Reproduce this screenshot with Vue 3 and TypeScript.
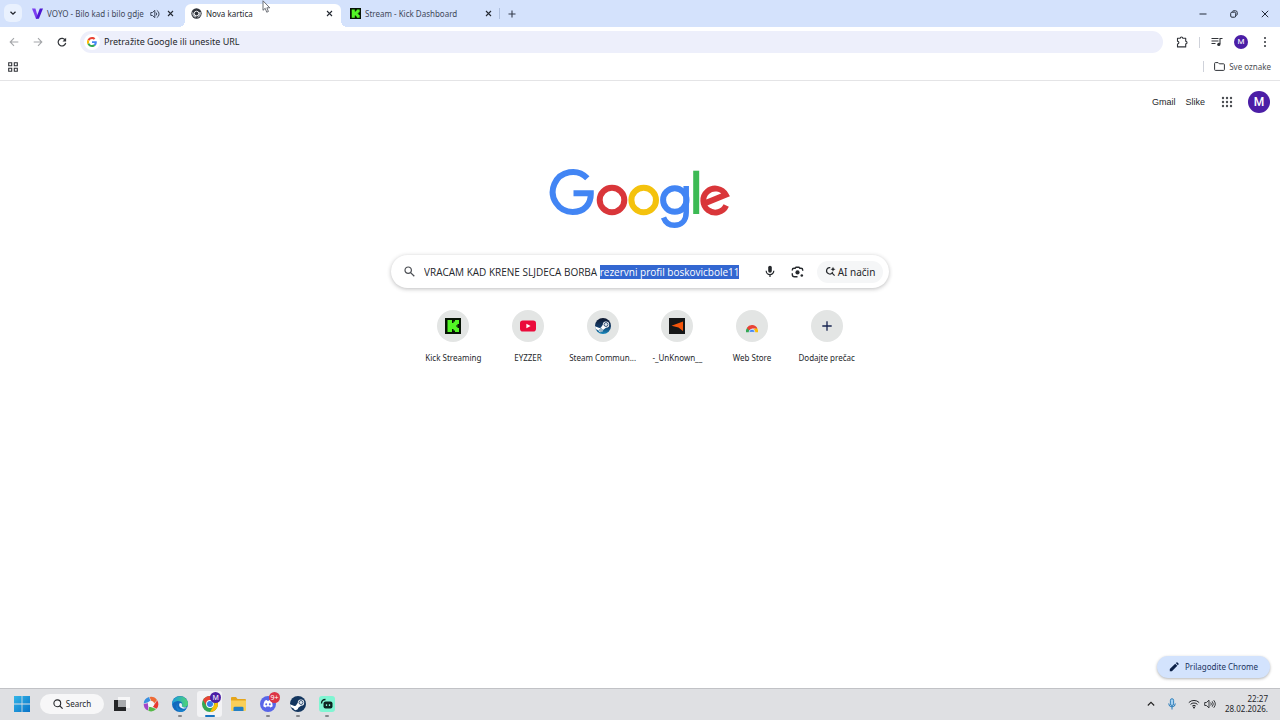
<script setup lang="ts">
import { onMounted, ref } from 'vue'

interface Tab {
  id: string
  title: string
  active?: boolean
  audio?: boolean
}

const tabs: Tab[] = [
  { id: 'voyo', title: 'VOYO - Bilo kad i bilo gdje', audio: true },
  { id: 'new', title: 'Nova kartica', active: true },
  { id: 'kick', title: 'Stream - Kick Dashboard' },
]

const shortcuts = [
  { id: 'kick', label: 'Kick Streaming' },
  { id: 'youtube', label: 'EYZZER' },
  { id: 'steam', label: 'Steam Commun...' },
  { id: 'faceit', label: '-_UnKnown__' },
  { id: 'store', label: 'Web Store' },
]

const taskApps = [
  { id: 'picasa', name: 'Picasa', running: false },
  { id: 'edge', name: 'Edge', running: true },
  { id: 'chrome', name: 'Chrome', running: true },
  { id: 'files', name: 'File Explorer', running: false },
  { id: 'discord', name: 'Discord', running: true },
  { id: 'steam', name: 'Steam', running: true },
  { id: 'streamlabs', name: 'Streamlabs', running: true },
]

const typed = 'VRACAM KAD KRENE SLJDECA BORBA '
const query = ref(typed + 'rezervni profil boskovicbole11')
const address = ref('')
const searchBox = ref<HTMLInputElement | null>(null)

onMounted(() => {
  searchBox.value?.focus()
  searchBox.value?.setSelectionRange(typed.length, query.value.length)
})
</script>

<template>
  <div class="screen">
    <header class="tabstrip">
      <button class="tab-search" aria-label="Pretraži kartice">
        <svg width="8" height="8" viewBox="0 0 8 8"><path d="M1.5 2.8 4 5.2l2.5-2.4" fill="none" stroke="#20242c" stroke-width="1.3" /></svg>
      </button>
      <nav class="tabs">
        <div v-for="tab in tabs" :key="tab.id" class="tab" :class="{ active: tab.active }">
          <svg v-if="tab.id === 'voyo'" class="favicon" viewBox="0 0 12 12">
            <path d="M0 .5h3.7L6.3 9 5.9 11.8H4.300z" fill="#7b3df0" />
            <path d="M12 .5H8.500L4.300 11.800H7.500z" fill="#4d16d2" />
          </svg>
          <svg v-else-if="tab.id === 'new'" class="favicon" viewBox="0 0 12 12">
            <circle cx="6" cy="6" r="5.600" fill="#30343a" />
            <path d="M1.800 3.900 4 7.500 6 8.300 4.900 10.700A4.800 4.800 0 0 1 1.800 3.900z" fill="#a9adb3" />
            <path d="M8.600 4.300h2A4.800 4.800 0 0 1 6.600 10.700L8.700 7z" fill="#a9adb3" />
            <circle cx="6" cy="6" r="2.500" fill="#30343a" stroke="#fff" />
          </svg>
          <svg v-else class="favicon" viewBox="0 0 16 16">
            <path d="M0 0h16v16H0z" fill="#071304" />
            <path d="M2.500 2h4.500v3h1.500V3.500H10V2h4v4h-1.500v1.500H11v1h1.500V10H14v4h-4v-1.500H8.500V11H7v3H2.500z" fill="#53f526" />
          </svg>
          <span class="tab-title">{{ tab.title }}</span>
          <svg v-if="tab.audio" class="audio" width="10" height="10" viewBox="0 0 10 10">
            <path d="M.8 3.500h1.700L4.800 1.300v7.400L2.500 6.500H.8z" fill="none" stroke="#3d485c" />
            <path d="M6 3.500a2 2 0 0 1 0 3M6.800 1.400a4 4 0 0 1 0 7.200" fill="none" stroke="#3d485c" />
          </svg>
          <button class="tab-close" :aria-label="'Zatvori ' + tab.title">
            <svg width="7" height="7" viewBox="0 0 7 7"><path d="m1 1 5 5m0-5L1 6" stroke="#252a33" stroke-width="1.100" /></svg>
          </button>
        </div>
      </nav>
      <button class="new-tab" aria-label="Nova kartica">
        <svg width="8" height="8" viewBox="0 0 8 8"><path d="M4 .5v7M.5 4h7" stroke="#333b4a" stroke-width="1.100" /></svg>
      </button>
      <div class="window-controls">
        <button aria-label="Minimiziraj"><svg width="8" height="8" viewBox="0 0 8 8"><path d="M.5 4h7" stroke="#222a38" /></svg></button>
        <button aria-label="Vrati"><svg width="8" height="8" viewBox="0 0 8 8"><rect x=".7" y="2.200" width="5" height="5" rx="1.200" fill="none" stroke="#222a38" /><path d="M2.300 1.500Q2.800.8 4 .8h1.500q1.700 0 1.700 1.700V4q0 1-.7 1.600" fill="none" stroke="#222a38" /></svg></button>
        <button aria-label="Zatvori"><svg width="8" height="8" viewBox="0 0 8 8"><path d="m.8.8 6.400 6.400m0-6.400L.8 7.200" stroke="#222a38" /></svg></button>
      </div>
    </header>

    <div class="toolbar">
      <button class="tool" aria-label="Natrag"><svg width="10" height="10" viewBox="0 0 10 10"><path d="M9.300 5H1.300M5 1.200 1.200 5 5 8.800" fill="none" stroke="#a4a6a9" stroke-width="1.100" /></svg></button>
      <button class="tool" aria-label="Naprijed"><svg width="10" height="10" viewBox="0 0 10 10"><path d="M.7 5h8M5 1.200 8.800 5 5 8.800" fill="none" stroke="#a4a6a9" stroke-width="1.100" /></svg></button>
      <button class="tool" aria-label="Ponovno učitaj"><svg width="10" height="10" viewBox="0 0 10 10"><path d="M8.300 3.300A3.800 3.800 0 1 0 8.700 6" fill="none" stroke="#303338" stroke-width="1.200" /><path d="M9.100.8v3.600H5.500z" fill="#303338" /></svg></button>
      <div class="omnibox">
        <span class="g-badge">
          <svg width="10" height="10" viewBox="0 0 48 48">
            <path fill="#EA4335" d="M24 9.500c3.500 0 6.700 1.200 9.200 3.600l6.900-6.900C35.900 2.400 30.500 0 24 0 14.600 0 6.500 5.400 2.600 13.200l8 6.200C12.400 13.700 17.700 9.500 24 9.500z" />
            <path fill="#4285F4" d="M47 24.600c0-1.600-.2-3.100-.4-4.600H24v9h12.900c-.6 3-2.300 5.500-4.800 7.200l7.700 6C44.400 38 47 32 47 24.600z" />
            <path fill="#FBBC05" d="M10.500 28.600A14.500 14.500 0 0 1 10.500 19.400l-8-6.200a24 24 0 0 0 0 21.600z" />
            <path fill="#34A853" d="M24 48c6.500 0 11.900-2.100 15.900-5.800l-7.700-6c-2.200 1.500-4.900 2.300-8.200 2.300-6.300 0-11.600-4.200-13.500-9.900l-8 6.200C6.500 42.600 14.600 48 24 48z" />
          </svg>
        </span>
        <input v-model="address" type="text" placeholder="Pretražite Google ili unesite URL" aria-label="Adresna traka" />
      </div>
      <button class="tool" aria-label="Proširenja"><svg width="12" height="12" viewBox="0 0 12 12"><path d="M1.500 2.300h2.700q0-1.300 1.300-1.300t1.300 1.300h2.900v3q1.300 0 1.300 1.300T9.700 7.900v3H1.500V8q1.400-.1 1.400-1.400T1.500 5.200z" fill="none" stroke="#303338" stroke-width="1.100" stroke-linejoin="round" /></svg></button>
      <span class="divider"></span>
      <button class="tool" aria-label="Upravljanje medijima"><svg width="12" height="10" viewBox="0 0 12 10"><path d="M.5 1.500h7M.5 4h7M.5 6.500h4M9 7V1.500h2.500" fill="none" stroke="#303338" stroke-width="1.100" /><circle cx="7.800" cy="7.400" r="1.600" fill="#303338" /></svg></button>
      <button class="tool" aria-label="Profil"><span class="avatar small">M</span></button>
      <button class="tool" aria-label="Izbornik"><svg width="4" height="12" viewBox="0 0 4 12" fill="#303338"><circle cx="2" cy="2" r="1" /><circle cx="2" cy="6" r="1" /><circle cx="2" cy="10" r="1" /></svg></button>
    </div>

    <div class="bookmarks">
      <button class="tool" aria-label="Grupe kartica"><svg width="10" height="10" viewBox="0 0 10 10"><path d="M.7.7h3v3h-3zM6.300.7h3v3h-3zM.7 6.300h3v3h-3zM6.300 6.300h3v3h-3z" fill="none" stroke="#303338" stroke-width="1.100" /></svg></button>
      <span class="divider"></span>
      <button class="all-bookmarks">
        <svg width="11" height="9" viewBox="0 0 11 9"><path d="M.6 1.400q0-.8.8-.8h2.700l1.200 1.200h4.300q.8 0 .8.8v5q0 .8-.8.8H1.400q-.8 0-.8-.8z" fill="none" stroke="#303338" /></svg>
        Sve oznake
      </button>
    </div>

    <main class="page">
      <nav class="page-nav">
        <a href="#gmail">Gmail</a>
        <a href="#slike">Slike</a>
        <button class="apps" aria-label="Google aplikacije">
          <svg width="12" height="12" viewBox="0 0 12 12" fill="#4a4d51">
            <template v-for="r in 3" :key="r"><circle v-for="c in 3" :key="c" :cx="c * 4 - 2" :cy="r * 4 - 2" r="1.200" /></template>
          </svg>
        </button>
        <button class="avatar large" aria-label="Google račun">M</button>
      </nav>

      <svg class="logo" width="182" height="61" viewBox="0 0 182 61" fill="none" stroke-width="6" role="img" aria-label="Google">
        <path d="M38.300 10.300A20 20 0 1 0 23.700 44C35.500 44 42 36 41.800 25.200H24.500" stroke="#4285f4" />
        <circle cx="63" cy="32" r="12.300" stroke="#d9363a" />
        <circle cx="94.700" cy="32" r="12.300" stroke="#f4c20d" />
        <circle cx="125.800" cy="32" r="11.700" stroke="#4285f4" />
        <path d="M137.200 18V44.500C137.200 53 132 57.300 125.500 57.300 119.500 57.300 116 53.500 114.500 49.500" stroke="#4285f4" stroke-width="5.500" />
        <path d="M147.200 2.700V46" stroke="#3cba54" />
        <path d="M177.200 37.500A12 12 0 1 1 176.800 26.800L156 35.300" stroke="#d9363a" stroke-width="5.800" />
      </svg>

      <form class="search" role="search" @submit.prevent>
        <svg width="11" height="11" viewBox="0 0 11 11"><circle cx="4.200" cy="4.200" r="3.200" fill="none" stroke="#4b4e53" stroke-width="1.200" /><path d="m6.600 6.600 3.700 3.700" stroke="#4b4e53" stroke-width="1.300" /></svg>
        <input ref="searchBox" v-model="query" type="text" aria-label="Pretraživanje" spellcheck="false" />
        <button type="button" class="tool" aria-label="Glasovno pretraživanje"><svg width="10" height="13" viewBox="0 0 10 13"><rect x="3.200" y=".8" width="3.600" height="7" rx="1.800" fill="#25282c" /><path d="M1.200 5.800a3.800 3.800 0 0 0 7.600 0M5 9.500V12" fill="none" stroke="#25282c" stroke-width="1.200" /></svg></button>
        <button type="button" class="tool lens" aria-label="Pretraživanje slikom"><svg width="13" height="12" viewBox="0 0 13 12"><path d="M1.300 4.600V4q0-1.700 1.700-1.700h1.200L5 1.200h3l.8 1.100H10q1.700 0 1.700 1.700v.8M1.300 7.300v1.200q0 2.200 2.200 2.200h3" fill="none" stroke="#25282c" stroke-width="1.400" /><circle cx="6.500" cy="6.400" r="2.100" fill="#25282c" /><circle cx="10.800" cy="9.500" r="1.300" fill="#25282c" /></svg></button>
        <button type="button" class="ai"><svg width="11" height="11" viewBox="0 0 11 11"><path d="M5.300 1.600A3.200 3.200 0 1 0 7.700 6M6.600 6.700l3 3" fill="none" stroke="#25282c" stroke-width="1.200" /><path d="M8 .7q.3 2.200 2.500 2.500Q8.300 3.500 8 5.700 7.700 3.500 5.500 3.200 7.700 2.900 8 .7z" fill="#25282c" /></svg>AI način</button>
      </form>

      <nav class="shortcuts">
        <a v-for="item in shortcuts" :key="item.id" class="shortcut" :href="'#' + item.id">
          <span class="disc">
            <svg v-if="item.id === 'kick'" width="16" height="16" viewBox="0 0 16 16">
              <path d="M0 0h16v16H0z" fill="#071304" />
              <path d="M2.500 2h4.500v3h1.500V3.500H10V2h4v4h-1.500v1.500H11v1h1.500V10H14v4h-4v-1.500H8.500V11H7v3H2.500z" fill="#53f526" />
            </svg>
            <svg v-else-if="item.id === 'youtube'" width="16" height="16" viewBox="0 0 16 16"><rect y="2.400" width="16" height="11.200" rx="2.800" fill="#eb0b3b" /><path d="m6.400 5.700 4.200 2.300-4.200 2.300z" fill="#fff" /></svg>
            <svg v-else-if="item.id === 'steam'" width="16" height="16" viewBox="0 0 16 16">
              <defs><linearGradient id="steam-a" x2="0" y2="1"><stop stop-color="#10182f" /><stop offset=".55" stop-color="#133c69" /><stop offset="1" stop-color="#1789bd" /></linearGradient></defs>
              <circle cx="8" cy="8" r="8" fill="url(#steam-a)" />
              <path d="m0 8.300 4.300 1.800q.7-.4 1.500-.4l2-2.900A3.200 3.200 0 1 1 11 9.800L8.300 11.800A2.400 2.400 0 0 1 3.600 12.400L.6 11z" fill="#fff" />
              <circle cx="11" cy="6.500" r="2" fill="#dce5ee" stroke="#17365e" stroke-width=".8" />
              <circle cx="6" cy="12" r="1.300" fill="none" stroke="#17507d" stroke-width=".7" />
            </svg>
            <svg v-else-if="item.id === 'faceit'" width="16" height="16" viewBox="0 0 16 16"><path d="M0 0h16v16H0z" fill="#161718" /><path d="M2.500 7.800 14 3.500v9.500L9.500 9.500z" fill="#f4550b" /></svg>
            <svg v-else width="16" height="16" viewBox="0 0 16 16">
              <path d="M2 14.300A6 6 0 0 1 3.300 9.500l3 3.200-.5 1.600z" fill="#34a853" />
              <path d="M14 14.300A6 6 0 0 0 12.700 9.500l-3.500 2.500.5 2.300z" fill="#fbbc05" />
              <path d="M2.800 10a6 6 0 0 1 10.600.6H8l-2.500 2z" fill="#e94235" />
              <path d="M5 14.300a3 3 0 0 1 6 0z" fill="#4285f4" stroke="#fff" stroke-width=".6" />
            </svg>
          </span>
          <span class="label">{{ item.label }}</span>
        </a>
        <button class="shortcut">
          <span class="disc"><svg width="10" height="10" viewBox="0 0 10 10"><path d="M5 .3v9.400M.3 5h9.400" stroke="#172450" stroke-width="1.300" /></svg></span>
          <span class="label">Dodajte prečac</span>
        </button>
      </nav>

      <button class="customize">
        <svg width="10" height="10" viewBox="0 0 10 10" fill="#0b2048"><path d="M.8 9.200V7.100L6.200 1.700l2.100 2.100-5.400 5.400zM6.800 1.100l.7-.6q.5-.4 1 0l1 1q.4.500 0 1l-.6.7z" /></svg>
        Prilagodite Chrome
      </button>
    </main>

    <footer class="taskbar">
      <button class="start" aria-label="Start">
        <svg width="16" height="16" viewBox="0 0 16 16">
          <defs><linearGradient id="win" x2="1" y2="1"><stop stop-color="#34b6e8" /><stop offset="1" stop-color="#0873c8" /></linearGradient></defs>
          <path d="M0 0h7.600v7.600H0zM8.400 0H16v7.600H8.400zM0 8.400h7.600V16H0zM8.400 8.400H16V16H8.400z" fill="url(#win)" />
        </svg>
      </button>
      <button class="task-search">
        <svg width="10" height="10" viewBox="0 0 10 10"><circle cx="4.300" cy="4.300" r="3.400" fill="none" stroke="#25272b" stroke-width="1.100" /><path d="m6.800 6.800 2.800 2.800" stroke="#25272b" stroke-width="1.200" /></svg>
        Search
      </button>
      <button class="task-view" aria-label="Task view">
        <svg width="16" height="16" viewBox="0 0 16 16"><path d="M4 1h12v11H4z" fill="#f7f7f8" /><path d="M0 4h4v7h8v4H0z" fill="#242527" /><path d="M4 4h8v7H4z" fill="#a9abae" /></svg>
      </button>
      <div class="task-apps">
        <button v-for="app in taskApps" :key="app.id" class="task-app" :class="{ current: app.id === 'chrome', running: app.running }" :aria-label="app.name">
          <svg v-if="app.id === 'picasa'" width="16" height="16" viewBox="0 0 16 16">
            <path d="M6.500.9A7.300 7.300 0 0 1 14 3.900L11 7.500Q8 5.500 6.500.9z" fill="#ee6a35" />
            <path d="M14.200 4.300A7.300 7.300 0 0 1 13.600 12.700L9.800 10.800Q12 8 14.200 4.300z" fill="#e8392f" />
            <path d="M13.200 13.100A7.300 7.300 0 0 1 5.300 14.800L6.300 10.600Q9.500 12 13.200 13.100z" fill="#55b947" />
            <path d="M4.900 14.600A7.300 7.300 0 0 1 .7 7.900L5 7.300Q5.500 10.800 4.900 14.600z" fill="#a244c8" />
            <path d="M.7 7.400A7.300 7.300 0 0 1 6 1L7.500 5.200Q4 6.600.7 7.400z" fill="#398fe0" />
            <circle cx="8" cy="8" r="3.100" fill="#f6f6f7" />
          </svg>
          <svg v-else-if="app.id === 'edge'" width="16" height="16" viewBox="0 0 16 16">
            <defs><linearGradient id="edge-top" x2="1"><stop stop-color="#1a9be0" /><stop offset="1" stop-color="#50d672" /></linearGradient></defs>
            <circle cx="8" cy="8" r="8" fill="#1169bd" />
            <path d="M.1 7A8 8 0 0 1 16 7.600C16 10.800 13 11.700 10.600 11 9.500 10.600 9.700 10 10 9.300 11.300 6.300 8 4.700 4.700 5.200 2.200 5.500.5 7 .1 9z" fill="url(#edge-top)" />
            <path d="M6.200 7.200C4 10 6.300 14 10.800 13.800 12.600 13.700 14 13 15 12A8 8 0 0 1 9.500 16C4.500 15.800 2.400 9.800 6.200 7.200z" fill="#1680cc" />
            <path d="M7.300 7.600Q6.400 11.500 10.600 12.600 13.500 13 15.300 11.300 14 12 10.600 11 9.300 10.500 10 9.300q.3-1.900-1.200-2.400z" fill="#e9f1f7" />
          </svg>
          <svg v-else-if="app.id === 'chrome'" width="16" height="16" viewBox="0 0 16 16">
            <circle cx="8" cy="8" r="8" fill="#34a853" />
            <path d="M1.100 4A8 8 0 0 1 14.900 4H8a4 4 0 0 0-3.500 6z" fill="#e94235" />
            <path d="M14.900 4A8 8 0 0 1 8 16l3.500-6A4 4 0 0 0 11 4.500V4z" fill="#fbbc05" />
            <circle cx="8" cy="8" r="3.900" fill="#fff" /><circle cx="8" cy="8" r="3" fill="#347bea" />
          </svg>
          <svg v-else-if="app.id === 'files'" width="17" height="16" viewBox="0 0 17 16"><path d="M1 2q0-1 1-1h4l1.500 2H15q1 0 1 1v3H1z" fill="#e5a51b" /><path d="M1 4.500h15V14q0 1-1 1H2q-1 0-1-1z" fill="#f9cf58" /><path d="M3.500 15v-3q0-1.300 1.300-1.300h7.400q1.300 0 1.300 1.300v3z" fill="#237fc4" /></svg>
          <svg v-else-if="app.id === 'discord'" width="16" height="16" viewBox="0 0 16 16"><circle cx="8" cy="8" r="8" fill="#5865e8" /><path d="M4.800 4.700q1-.6 2-.7l.4.8h1.600l.4-.8q1 .1 2 .7 1.600 2.400 1.500 5.600-1.200 1-2.400 1.300l-.7-1H6.400l-.7 1q-1.200-.3-2.400-1.300Q3.200 7.100 4.800 4.700z" fill="#fff" /><ellipse cx="6.200" cy="8.300" rx="1" ry="1.100" fill="#5865e8" /><ellipse cx="9.800" cy="8.300" rx="1" ry="1.100" fill="#5865e8" /></svg>
          <svg v-else-if="app.id === 'steam'" width="16" height="16" viewBox="0 0 16 16">
            <circle cx="8" cy="8" r="8" fill="#14365f" />
            <path d="m0 8.300 4.300 1.800q.7-.4 1.500-.4l2-2.900A3.200 3.200 0 1 1 11 9.800L8.300 11.800A2.400 2.400 0 0 1 3.600 12.400L.6 11z" fill="#fff" />
            <circle cx="11" cy="6.500" r="2" fill="#dce5ee" stroke="#17365e" stroke-width=".8" />
          </svg>
          <svg v-else width="16" height="16" viewBox="0 0 16 16"><rect width="16" height="16" rx="3" fill="#80f5d2" /><rect x="4.500" y="5.500" width="9" height="7" rx="2" fill="#0c2420" /><path d="M2.500 7.500q0-4 4-4" fill="none" stroke="#0c2420" stroke-width="1.300" /><path d="M7.500 8.300v1.700M10.500 8.300v1.700" stroke="#80f5d2" stroke-width="1.300" /></svg>
          <span v-if="app.id === 'chrome'" class="badge profile">M</span>
          <span v-if="app.id === 'discord'" class="badge count">9+</span>
        </button>
      </div>
      <div class="tray">
        <button aria-label="Skrivene ikone"><svg width="8" height="8" viewBox="0 0 8 8"><path d="M.8 5.500 4 2.300l3.200 3.200" fill="none" stroke="#222" stroke-width="1.100" /></svg></button>
        <button class="mic" aria-label="Mikrofon"><svg width="8" height="12" viewBox="0 0 8 12"><rect x="2.400" y=".7" width="3.200" height="6.800" rx="1.600" fill="#a9d2f1" stroke="#2479b9" stroke-width=".9" /><path d="M.7 5.500a3.300 3.300 0 0 0 6.600 0M4 9v2.500" fill="none" stroke="#2479b9" /></svg></button>
        <button aria-label="Mreža"><svg width="12" height="10" viewBox="0 0 12 10"><path d="M.8 3.600a7.300 7.300 0 0 1 10.400 0M2.500 5.400a5 5 0 0 1 7 0M4.200 7.100a2.600 2.600 0 0 1 3.600 0" fill="none" stroke="#26282c" /><circle cx="6" cy="8.400" r="1" fill="#26282c" /></svg></button>
        <button aria-label="Glasnoća"><svg width="12" height="10" viewBox="0 0 12 10"><path d="M.7 3.500h1.700L5 1.200v7.600L2.400 6.500H.7zM6.700 3.500q1.300 1.500 0 3M8.200 2.300q2.200 2.700 0 5.400M9.700 1.200q3.200 3.800 0 7.600" fill="none" stroke="#26282c" stroke-width=".9" /></svg></button>
        <button class="clock"><time>22:27</time><span>28.02.2026.</span></button>
      </div>
    </footer>

    <svg class="cursor" width="9" height="14" viewBox="0 0 9 14"><path d="M1 .8v9.500l2.200-2 1.500 3.900 1.700-.7L4.900 7.800h2.900z" fill="#fff" stroke="#5c6068" stroke-width=".9" /></svg>
  </div>
</template>

<style>
body {
  margin: 0;
}
</style>

<style scoped>
.screen {
  position: relative;
  display: flex;
  flex-direction: column;
  min-height: 100vh;
  overflow: hidden;
  background: #fff;
  color: #25272b;
  font-family: "Noto Sans", "Open Sans", sans-serif;
  font-size: 8px;
  line-height: 12px;
}
*,
*::before,
*::after {
  box-sizing: border-box;
}
button,
input {
  margin: 0;
  padding: 0;
  border: 0;
  outline: 0;
  background: none;
  color: inherit;
  font: inherit;
}
button {
  display: flex;
  align-items: center;
  justify-content: center;
}
a {
  color: inherit;
  text-decoration: none;
}
svg {
  display: block;
  flex: none;
}
.tabstrip {
  display: flex;
  align-items: flex-start;
  height: 27px;
  padding: 4px 0 0 4px;
  background: #d4e2fc;
}
.tab-search {
  width: 18px;
  height: 18px;
  border-radius: 6px;
  background: #e9f1fe;
}
.tabs {
  display: flex;
  gap: 3px;
  margin-left: 4px;
}
.tab {
  position: relative;
  display: flex;
  align-items: center;
  width: 156px;
  height: 23px;
  padding: 0 6px 4px;
  color: #3f4859;
}
.tab.active {
  border-radius: 6px 6px 0 0;
  background: #fff;
  color: #25272b;
}
.tab.active::before,
.tab.active::after {
  content: "";
  position: absolute;
  bottom: 0;
  width: 6px;
  height: 6px;
}
.tab.active::before {
  right: 100%;
  background: radial-gradient(circle at 0 0, transparent 6px, #fff 6px);
}
.tab.active::after {
  left: 100%;
  background: radial-gradient(circle at 100% 0, transparent 6px, #fff 6px);
}
.favicon {
  width: 11px;
  height: 11px;
}
.tab-title {
  flex: 1;
  margin-left: 4px;
  white-space: nowrap;
}
.audio {
  margin-right: 4px;
}
.tab-close {
  width: 12px;
  height: 12px;
}
.new-tab {
  width: 24px;
  height: 11px;
  margin: 4px 0 0 -1px;
  border-left: 1px solid #afc0df;
}
.window-controls {
  display: flex;
  margin-left: auto;
}
.window-controls button {
  width: 31px;
  height: 19px;
}
.toolbar {
  display: flex;
  align-items: center;
  height: 30px;
  padding: 0 3px 0 2px;
}
.tool {
  width: 24px;
  height: 22px;
  flex: none;
}
.omnibox {
  display: flex;
  flex: 1;
  align-items: center;
  height: 22px;
  margin: 0 7px 0 6px;
  padding: 0 10px 0 4px;
  border-radius: 11px;
  background: #edeffb;
}
.g-badge {
  display: grid;
  place-items: center;
  width: 16px;
  height: 16px;
  border-radius: 8px;
  background: #fff;
}
.omnibox input {
  flex: 1;
  margin-left: 4px;
  font-size: 9px;
}
.omnibox input::placeholder {
  color: #25272b;
  opacity: 1;
}
.divider {
  width: 1px;
  height: 11px;
  margin: 0 5px;
  background: #cfd2da;
}
.bookmarks {
  display: flex;
  align-items: center;
  height: 24px;
  padding: 0 9px 4px 1px;
  border-bottom: 1px solid #e4e4e6;
}
.bookmarks .divider {
  margin: 0 10px 0 auto;
}
.all-bookmarks {
  gap: 4px;
  color: #4a4d52;
}
.page {
  display: flex;
  flex: 1;
  flex-direction: column;
  align-items: center;
}
.page-nav {
  display: flex;
  align-self: stretch;
  align-items: center;
  justify-content: flex-end;
  gap: 10px;
  padding: 10px 10px 0 0;
  font-family: "Liberation Sans", Arial, sans-serif;
  font-size: 9px;
}
.apps {
  width: 23px;
  height: 22px;
}
.avatar {
  display: flex;
  align-items: center;
  justify-content: center;
  border-radius: 50%;
  background: #4b1ea6;
  color: #fff;
  font-family: Roboto, sans-serif;
}
.avatar.small {
  width: 14px;
  height: 14px;
  font-size: 8px;
}
.avatar.large {
  width: 22px;
  height: 22px;
  font-size: 12px;
  font-weight: 500;
}
.logo {
  margin-top: 55px;
}
.search {
  display: flex;
  align-items: center;
  width: 498px;
  max-width: 100%;
  height: 33px;
  margin-top: 26px;
  padding: 0 6px 0 13px;
  border-radius: 17px;
  background: #fff;
  box-shadow: 0 1px 4px rgb(32 33 36 / 30%);
}
.search input {
  flex: 1;
  min-width: 0;
  height: 14px;
  margin: 0 3px 0 9px;
  font-family: "Open Sans", "Noto Sans", sans-serif;
  font-size: 10px;
  line-height: 14px;
}
.search input::selection {
  background: #3367d1;
  color: #fff;
}
.lens {
  margin: 0 8px 0 3px;
}
.ai {
  gap: 2px;
  width: 66px;
  height: 22px;
  border-radius: 11px;
  background: #f5f6f7;
  font-size: 10px;
}
.shortcuts {
  display: grid;
  grid-template-columns: repeat(6, 1fr);
  width: 448px;
  max-width: 100%;
  margin-top: 22px;
}
.shortcut {
  display: flex;
  flex-direction: column;
  align-items: center;
  gap: 10px;
}
.disc {
  display: grid;
  place-items: center;
  width: 32px;
  height: 32px;
  border-radius: 16px;
  background: #e3e5e4;
}
.label {
  white-space: nowrap;
}
.customize {
  align-self: flex-end;
  gap: 6px;
  width: 113px;
  height: 22px;
  margin: auto 10px 10px 0;
  border-radius: 11px;
  background: #d3e3fd;
  box-shadow: 0 1px 3px rgb(0 0 0 / 30%);
  color: #19335f;
  white-space: nowrap;
}
.taskbar {
  display: flex;
  align-items: center;
  height: 32px;
  padding: 0 12px 1px 14px;
  border-top: 1px solid #c1c2c6;
  background: #dfe0e3;
}
.task-search {
  gap: 3px;
  width: 64px;
  height: 20px;
  margin: 0 10px;
  border-radius: 10px;
  background: #f7f7f8;
}
.task-apps {
  display: grid;
  grid-template-columns: repeat(7, 1fr);
  justify-items: center;
  width: 206px;
  margin-left: 6px;
}
.task-app {
  position: relative;
  width: 25px;
  height: 26px;
  border-radius: 3px;
}
.task-app.current {
  background: #f3f3f5;
}
.task-app.running::after {
  content: "";
  position: absolute;
  bottom: 0;
  left: 50%;
  width: 4px;
  height: 2px;
  margin-left: -2px;
  border-radius: 1px;
  background: #85878b;
}
.task-app.current::after {
  width: 10px;
  margin-left: -5px;
  background: #1673c2;
}
.badge {
  position: absolute;
  top: 1px;
  right: 1px;
  display: grid;
  place-items: center;
  width: 11px;
  height: 11px;
  border-radius: 50%;
  color: #fff;
  font-size: 7px;
  line-height: 11px;
}
.profile {
  background: #4b1ea6;
}
.count {
  background: #dc3545;
}
.tray {
  display: flex;
  align-items: center;
  margin-left: auto;
}
.tray button {
  width: 16px;
  height: 22px;
}
.tray .mic {
  margin: 0 6px 0 5px;
}
.tray .clock {
  flex-direction: column;
  align-items: flex-end;
  width: auto;
  margin-left: 7px;
  line-height: 10px;
}
.cursor {
  position: absolute;
  top: 0;
  left: 262px;
}
</style>
